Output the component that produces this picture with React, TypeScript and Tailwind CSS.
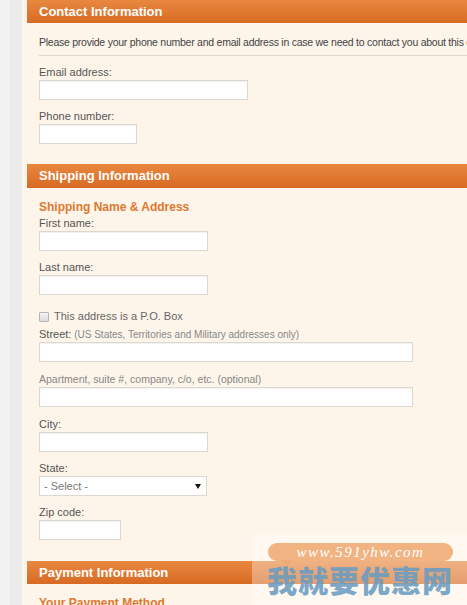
import React from 'react';

const font = { fontFamily: '"Liberation Sans", Arial, sans-serif' };

function SectionHeader({ title, h }: { title: string; h: string }) {
  return (
    <div className={`${h} shrink-0 flex items-center pl-[12px] bg-gradient-to-b from-[#e8883f] to-[#d86a22] text-white font-bold text-[13px]`}>
      {title}
    </div>
  );
}

function Field({ label, width, note, muted, mb = 'mb-[10px]' }: { label: string; width: string; note?: string; muted?: boolean; mb?: string }) {
  return (
    <div className={`flex flex-col ${mb}`}>
      <div className={`h-[13px] leading-[13px] ${muted ? 'text-[10.5px] text-[#888]' : 'text-[11px] text-[#555]'}`}>
        {label}
        {note && <span className="text-[10px] text-[#888]"> {note}</span>}
      </div>
      <input
        type="text"
        className={`mt-[1px] block h-[20px] bg-white border border-[#ddd8cf] shadow-[inset_0_1px_1px_rgba(0,0,0,0.06)] outline-none ${width}`}
      />
    </div>
  );
}

export default function App() {
  return (
    <div className="relative w-[467px] h-[605px] overflow-hidden flex bg-[#eeeeee] whitespace-nowrap" style={font}>
      {/* gray left rail */}
      <div className="w-[10px] shrink-0 bg-[#f2f2f2]" />
      <div className="w-[12px] shrink-0 bg-[#ebebeb]" />

      {/* cream panel */}
      <div className="flex-1 flex flex-col bg-[#fdf5ea] pl-[5px]">
        {/* CONTACT */}
        <SectionHeader title="Contact Information" h="h-[23px]" />
        <div className="flex flex-col pl-[12px]">
          <div className="mt-[13px] pb-[6px] h-[20px] leading-[13px] text-[10.5px] tracking-[-0.25px] text-[#444] border-b border-[#ddd6cc]">
            Please provide your phone number and email address in case we need to contact you about this order.
          </div>
          <div className="flex flex-col mt-[10px]">
            <Field label="Email address:" width="w-[209px]" />
            <Field label="Phone number:" width="w-[98px]" />
          </div>
        </div>

        {/* SHIPPING */}
        <div className="mt-[10px] flex flex-col">
          <SectionHeader title="Shipping Information" h="h-[24px]" />
        </div>
        <div className="flex flex-col pl-[12px]">
          <div className="mt-[12px] h-[14px] leading-[14px] text-[12px] font-bold text-[#e0782f]">
            Shipping Name &amp; Address
          </div>
          <div className="flex flex-col mt-[3px]">
            <Field label="First name:" width="w-[169px]" />
            <Field label="Last name:" width="w-[169px]" />
          </div>
          <div className="mt-[5px] h-[13px] flex items-center gap-[5px] text-[11px] text-[#666]">
            <span className="w-[10px] h-[10px] border border-[#b5b5b5] rounded-[1px] bg-gradient-to-b from-[#f4f4f4] to-[#dcdcdc]" />
            This address is a P.O. Box
          </div>
          <div className="flex flex-col mt-[5px]">
            <Field label="Street:" note="(US States, Territories and Military addresses only)" width="w-[374px]" mb="mb-[11px]" />
            <Field label="Apartment, suite #, company, c/o, etc. (optional)" muted width="w-[374px]" mb="mb-[11px]" />
            <Field label="City:" width="w-[169px]" />
            <div className="flex flex-col mb-[10px]">
              <div className="h-[13px] leading-[13px] text-[11px] text-[#555]">State:</div>
              <div className="mt-[1px] h-[20px] w-[168px] bg-white border border-[#ddd8cf] flex items-center justify-between pl-[4px] pr-[5px] text-[11px] text-[#777]">
                - Select -
                <svg width="6" height="5" viewBox="0 0 6 5">
                  <path d="M0 0 L6 0 L3 5 Z" fill="#111" />
                </svg>
              </div>
            </div>
            <Field label="Zip code:" width="w-[82px]" />
          </div>
        </div>

        {/* PAYMENT */}
        <div className="mt-[11px] flex flex-col">
          <SectionHeader title="Payment Information" h="h-[23px]" />
        </div>
        <div className="pl-[12px] mt-[12px] h-[14px] leading-[14px] text-[12px] font-bold text-[#e0782f]">
          Your Payment Method
        </div>
      </div>

      {/* watermark overlay */}
      <div className="absolute left-[252px] top-[535px] w-[215px] h-[70px] bg-white/35" />
      <div className="absolute left-[268px] top-[543px] w-[185px] h-[18px] rounded-full bg-[#f0ab74]/90 flex items-center justify-center text-white italic text-[15px] tracking-[1.5px]" style={{ fontFamily: '"Liberation Serif", serif' }}>
        www.591yhw.com
      </div>
      <div className="absolute left-[281px] top-[560px] w-0 h-0 border-l-[6px] border-r-[6px] border-t-[6px] border-l-transparent border-r-transparent border-t-[#f0ab74]" />
      <div className="absolute left-[267px] top-[561px] text-[30px] leading-[36px] font-black text-[#6b9cc0]/90 tracking-[1px]" style={{ fontFamily: '"Noto Sans CJK SC", sans-serif' }}>
        我就要优惠网
      </div>
    </div>
  );
}
